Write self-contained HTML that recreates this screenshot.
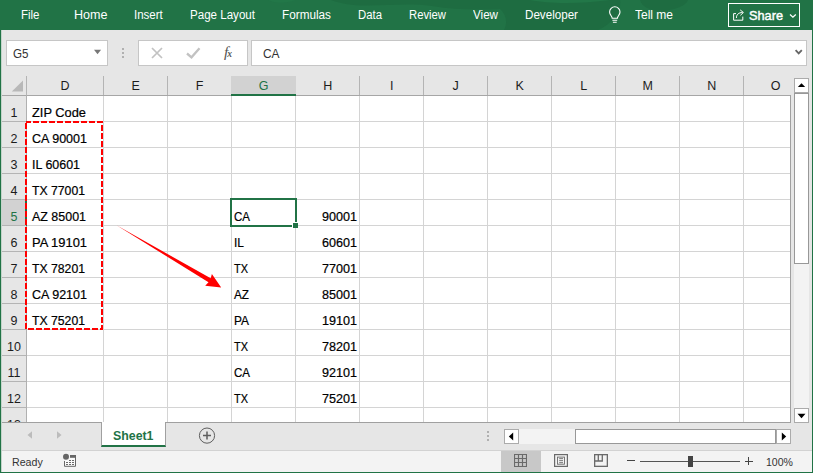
<!DOCTYPE html>
<html lang="en"><head><meta charset="utf-8"><title>Excel</title>
<style>
*{box-sizing:border-box;margin:0;padding:0}
html,body{width:813px;height:473px;overflow:hidden;background:#e6e6e6}
body{position:relative;font-family:"Liberation Sans",sans-serif;color:#000;-webkit-font-smoothing:antialiased}
.a{position:absolute;white-space:nowrap}
.t{position:absolute;white-space:nowrap;line-height:1;transform-origin:0 0}
.m{color:#fff;font-size:12px;top:9px}
.ch{font-size:12.5px;color:#1c1c1c;text-align:center;width:64px;top:80px}
.rh{font-size:12.5px;color:#1c1c1c;text-align:center;width:24px;left:2px}
.c{font-size:12.5px;color:#000;-webkit-text-stroke:0.2px #000}
.r{text-align:right}
</style></head><body>

<div class="a" id="ribbon" style="left:0;top:0;width:813px;height:30px;background:#217346"></div>
<svg class="a" style="left:0;top:0" width="813" height="30" viewBox="0 0 813 30">
<g fill="#1e6c41">
<path d="M331 0 C342 4 352 5.5 366 5.5 C390 5.5 410 3 432 6 C455 10 478 10 500 9 C506 14 508 22 504 30 L598 30 C612 24 622 12 620 0 Z"></path>
<path d="M640 0 C642 8 652 11 663 10.5 C675 10 686 6 688 0 Z"></path>
</g>
<g fill="#227748">
<path d="M268 0 C274 3 284 4 296 0 Z"></path>
<path d="M530 0 C550 4 580 4 610 0 Z"></path>
</g>
</svg>
<span class="t m" style="left: 21px; transform: scaleX(0.9564);">File</span>
<span class="t m" style="left: 74px; transform: scaleX(1.0464);">Home</span>
<span class="t m" style="left: 133.5px; transform: scaleX(0.9595);">Insert</span>
<span class="t m" style="left: 190px; transform: scaleX(0.9645);">Page Layout</span>
<span class="t m" style="left: 282px; transform: scaleX(0.9797);">Formulas</span>
<span class="t m" style="left: 358px; transform: scaleX(0.9464);">Data</span>
<span class="t m" style="left: 409px; transform: scaleX(0.9401);">Review</span>
<span class="t m" style="left: 472.5px; transform: scaleX(0.9691);">View</span>
<span class="t m" style="left: 525px; transform: scaleX(0.9689);">Developer</span>
<span class="t m" style="left: 634.5px; transform: scaleX(0.9996);">Tell me</span>
<svg class="a" style="left:606px;top:5px" width="18" height="20" viewBox="0 0 18 20" fill="none" stroke="#fff" stroke-width="1.1">
<path d="M6.2 13.2 C6.2 11.2 3.6 10 3.6 7 A5.2 5.2 0 0 1 14 7 C14 10 11.4 11.2 11.4 13.2 Z"></path>
<path d="M6.4 15.2 H11.2 M6.9 17.2 H10.7"></path>
</svg>
<div class="a" style="left:728px;top:3px;width:72px;height:24px;border:1px solid #fff"></div>
<svg class="a" style="left:731px;top:8px" width="14" height="14" viewBox="0 0 14 14" fill="none" stroke="#fff" stroke-width="1">
<path d="M5 5.6 H2.6 V12.2 H11.8 V8.6"></path>
<path d="M5.4 10 C5.4 6.6 7.6 4.5 11.6 4.5 M9.2 1.9 L12.4 4.5 L9.4 7.3"></path>
</svg>
<span class="t" style="left: 749px; top: 8.5px; color: rgb(255, 255, 255); font-size: 13.5px; -webkit-text-stroke: 0.45px rgb(255, 255, 255); transform: scaleX(0.9436);">Share</span>
<svg class="a" style="left:787.6px;top:11.5px" width="10" height="8" viewBox="0 0 10 8" fill="none" stroke="#fff" stroke-width="1.3"><path d="M2 2.5 L4.9 5.2 L7.8 2.5"></path></svg>
<div class="a" style="left:6px;top:40px;width:102px;height:26px;background:#fff;border:1px solid #c6c6c6"></div>
<span class="t" style="left: 13px; top: 48px; font-size: 12.5px; color: rgb(51, 51, 51); transform: scaleX(0.9288);">G5</span>
<svg class="a" style="left:93px;top:49px" width="10" height="7" viewBox="0 0 10 7"><path d="M1 0.8 H8.1 L4.55 5.2 Z" fill="#777"></path></svg>
<div class="a" style="left:122px;top:48px;width:2px;height:2px;background:#b0b0b0;box-shadow:0 4px 0 #b0b0b0,0 8px 0 #b0b0b0"></div>
<div class="a" style="left:138px;top:40px;width:110px;height:26px;background:#fff;border:1px solid #c6c6c6"></div>
<svg class="a" style="left:151px;top:47px" width="12" height="12" viewBox="0 0 12 12" fill="none" stroke="#c2c2c2" stroke-width="1.7"><path d="M1 1 L11 11 M11 1 L1 11"></path></svg>
<svg class="a" style="left:186px;top:47px" width="15" height="12" viewBox="0 0 15 12" fill="none" stroke="#c2c2c2" stroke-width="2.3"><path d="M1 6.5 L5.5 10.3 L13.5 1.2"></path></svg>
<span class="t" style="left:224px;top:44px;font-family:'Liberation Serif',serif;font-style:italic;font-size:15.5px;color:#555">f<span style="font-size:9.5px;font-weight:bold;margin-left:-1px">x</span></span>
<div class="a" style="left:251px;top:40px;width:556px;height:26px;background:#fff;border:1px solid #c6c6c6"></div>
<span class="t" style="left: 263px; top: 48px; font-size: 12.5px; color: rgb(51, 51, 51); transform: scaleX(0.9554);">CA</span>
<svg class="a" style="left:794px;top:48.3px" width="10" height="8" viewBox="0 0 10 8" fill="none" stroke="#666" stroke-width="1.9"><path d="M1.6 2.2 L4.7 5.3 L7.8 2.2"></path></svg>
<div class="a" style="left:27px;top:96px;width:764px;height:326px;background:#fff"></div>
<span class="t ch" style="left:27px;width:76px;color:#1c1c1c">D</span>
<span class="t ch" style="left:103.7px;width:64px;color:#1c1c1c">E</span>
<span class="t ch" style="left:167.7px;width:64px;color:#1c1c1c">F</span>
<span class="t ch" style="left:295.7px;width:64px;color:#1c1c1c">H</span>
<span class="t ch" style="left:359.7px;width:64px;color:#1c1c1c">I</span>
<span class="t ch" style="left:423.7px;width:64px;color:#1c1c1c">J</span>
<span class="t ch" style="left:487.7px;width:64px;color:#1c1c1c">K</span>
<span class="t ch" style="left:551.7px;width:64px;color:#1c1c1c">L</span>
<span class="t ch" style="left:615.7px;width:64px;color:#1c1c1c">M</span>
<span class="t ch" style="left:679.7px;width:64px;color:#1c1c1c">N</span>
<span class="t ch" style="left:743.7px;width:64px;color:#1c1c1c">O</span>
<div class="a" style="left:26px;top:76px;width:1px;height:19px;background:#b4b4b4"></div>
<div class="a" style="left:103px;top:76px;width:1px;height:19px;background:#b4b4b4"></div>
<div class="a" style="left:167px;top:76px;width:1px;height:19px;background:#b4b4b4"></div>
<div class="a" style="left:231px;top:76px;width:1px;height:19px;background:#b4b4b4"></div>
<div class="a" style="left:295px;top:76px;width:1px;height:19px;background:#b4b4b4"></div>
<div class="a" style="left:359px;top:76px;width:1px;height:19px;background:#b4b4b4"></div>
<div class="a" style="left:423px;top:76px;width:1px;height:19px;background:#b4b4b4"></div>
<div class="a" style="left:487px;top:76px;width:1px;height:19px;background:#b4b4b4"></div>
<div class="a" style="left:551px;top:76px;width:1px;height:19px;background:#b4b4b4"></div>
<div class="a" style="left:615px;top:76px;width:1px;height:19px;background:#b4b4b4"></div>
<div class="a" style="left:679px;top:76px;width:1px;height:19px;background:#b4b4b4"></div>
<div class="a" style="left:743px;top:76px;width:1px;height:19px;background:#b4b4b4"></div>
<div class="a" style="left:2px;top:95px;width:789px;height:1px;background:#a6a6a6"></div>
<div class="a" style="left:231px;top:76px;width:65px;height:20px;background:#d2d2d2;border-bottom:2px solid #217346"></div>
<span class="t ch" style="left:231.7px;width:64px;color:#217346">G</span>
<svg class="a" style="left:11px;top:80px" width="13" height="12" viewBox="0 0 13 12"><path d="M12 0.5 V11.5 H0.8 Z" fill="#b8b8b8"></path></svg>
<div class="a" style="left:26px;top:95px;width:1px;height:327px;background:#b0b0b0"></div>
<div class="a" style="left:2px;top:200px;width:25px;height:26px;background:#d2d2d2;border-right:2px solid #217346"></div>
<div class="a" style="left:2px;top:121px;width:24px;height:1px;background:#b4b4b4"></div>
<div class="a" style="left:27px;top:121px;width:764px;height:1px;background:#d4d4d4"></div>
<div class="a" style="left:2px;top:147px;width:24px;height:1px;background:#b4b4b4"></div>
<div class="a" style="left:27px;top:147px;width:764px;height:1px;background:#d4d4d4"></div>
<div class="a" style="left:2px;top:173px;width:24px;height:1px;background:#b4b4b4"></div>
<div class="a" style="left:27px;top:173px;width:764px;height:1px;background:#d4d4d4"></div>
<div class="a" style="left:2px;top:199px;width:24px;height:1px;background:#b4b4b4"></div>
<div class="a" style="left:27px;top:199px;width:764px;height:1px;background:#d4d4d4"></div>
<div class="a" style="left:2px;top:225px;width:24px;height:1px;background:#b4b4b4"></div>
<div class="a" style="left:27px;top:225px;width:764px;height:1px;background:#d4d4d4"></div>
<div class="a" style="left:2px;top:251px;width:24px;height:1px;background:#b4b4b4"></div>
<div class="a" style="left:27px;top:251px;width:764px;height:1px;background:#d4d4d4"></div>
<div class="a" style="left:2px;top:277px;width:24px;height:1px;background:#b4b4b4"></div>
<div class="a" style="left:27px;top:277px;width:764px;height:1px;background:#d4d4d4"></div>
<div class="a" style="left:2px;top:303px;width:24px;height:1px;background:#b4b4b4"></div>
<div class="a" style="left:27px;top:303px;width:764px;height:1px;background:#d4d4d4"></div>
<div class="a" style="left:2px;top:329px;width:24px;height:1px;background:#b4b4b4"></div>
<div class="a" style="left:27px;top:329px;width:764px;height:1px;background:#d4d4d4"></div>
<div class="a" style="left:2px;top:355px;width:24px;height:1px;background:#b4b4b4"></div>
<div class="a" style="left:27px;top:355px;width:764px;height:1px;background:#d4d4d4"></div>
<div class="a" style="left:2px;top:381px;width:24px;height:1px;background:#b4b4b4"></div>
<div class="a" style="left:27px;top:381px;width:764px;height:1px;background:#d4d4d4"></div>
<div class="a" style="left:2px;top:407px;width:24px;height:1px;background:#b4b4b4"></div>
<div class="a" style="left:27px;top:407px;width:764px;height:1px;background:#d4d4d4"></div>
<div class="a" style="left:103px;top:96px;width:1px;height:326px;background:#d4d4d4"></div>
<div class="a" style="left:167px;top:96px;width:1px;height:326px;background:#d4d4d4"></div>
<div class="a" style="left:231px;top:96px;width:1px;height:326px;background:#d4d4d4"></div>
<div class="a" style="left:295px;top:96px;width:1px;height:326px;background:#d4d4d4"></div>
<div class="a" style="left:359px;top:96px;width:1px;height:326px;background:#d4d4d4"></div>
<div class="a" style="left:423px;top:96px;width:1px;height:326px;background:#d4d4d4"></div>
<div class="a" style="left:487px;top:96px;width:1px;height:326px;background:#d4d4d4"></div>
<div class="a" style="left:551px;top:96px;width:1px;height:326px;background:#d4d4d4"></div>
<div class="a" style="left:615px;top:96px;width:1px;height:326px;background:#d4d4d4"></div>
<div class="a" style="left:679px;top:96px;width:1px;height:326px;background:#d4d4d4"></div>
<div class="a" style="left:743px;top:96px;width:1px;height:326px;background:#d4d4d4"></div>
<span class="t rh" style="top:107px;color:#1c1c1c">1</span>
<span class="t rh" style="top:133px;color:#1c1c1c">2</span>
<span class="t rh" style="top:159px;color:#1c1c1c">3</span>
<span class="t rh" style="top:185px;color:#1c1c1c">4</span>
<span class="t rh" style="top:211px;color:#217346">5</span>
<span class="t rh" style="top:237px;color:#1c1c1c">6</span>
<span class="t rh" style="top:263px;color:#1c1c1c">7</span>
<span class="t rh" style="top:289px;color:#1c1c1c">8</span>
<span class="t rh" style="top:315px;color:#1c1c1c">9</span>
<span class="t rh" style="top:341px;color:#1c1c1c">10</span>
<span class="t rh" style="top:367px;color:#1c1c1c">11</span>
<span class="t rh" style="top:393px;color:#1c1c1c">12</span>
<span class="t rh" style="top:419px;color:#1c1c1c">13</span>
<span class="t c" style="left: 32px; top: 107px; transform: scaleX(1.027);">ZIP Code</span>
<span class="t c" style="left: 32px; top: 133px; transform: scaleX(1.0014);">CA 90001</span>
<span class="t c" style="left: 32px; top: 159px; transform: scaleX(0.9958);">IL 60601</span>
<span class="t c" style="left: 32px; top: 185px; transform: scaleX(0.9775);">TX 77001</span>
<span class="t c" style="left: 32px; top: 211px; transform: scaleX(0.996);">AZ 85001</span>
<span class="t c" style="left: 32px; top: 237px; transform: scaleX(1.032);">PA 19101</span>
<span class="t c" style="left: 32px; top: 263px; transform: scaleX(0.9775);">TX 78201</span>
<span class="t c" style="left: 32px; top: 289px; transform: scaleX(1.0014);">CA 92101</span>
<span class="t c" style="left: 32px; top: 315px; transform: scaleX(0.9775);">TX 75201</span>
<span class="t c" style="left: 234px; top: 211px; transform: scaleX(0.9209);">CA</span>
<span class="t c r" style="left: 322px; top: 211px; transform: scaleX(1.0067);">90001</span>
<span class="t c" style="left: 234px; top: 237px; transform: scaleX(0.9581);">IL</span>
<span class="t c r" style="left: 322px; top: 237px; transform: scaleX(1.0067);">60601</span>
<span class="t c" style="left: 234px; top: 263px; transform: scaleX(0.8759);">TX</span>
<span class="t c r" style="left: 322px; top: 263px; transform: scaleX(1.0067);">77001</span>
<span class="t c" style="left: 234px; top: 289px; transform: scaleX(0.9384);">AZ</span>
<span class="t c r" style="left: 322px; top: 289px; transform: scaleX(1.0067);">85001</span>
<span class="t c" style="left: 234px; top: 315px; transform: scaleX(0.9524);">PA</span>
<span class="t c r" style="left: 322px; top: 315px; transform: scaleX(1.0067);">19101</span>
<span class="t c" style="left: 234px; top: 341px; transform: scaleX(0.8759);">TX</span>
<span class="t c r" style="left: 322px; top: 341px; transform: scaleX(1.0067);">78201</span>
<span class="t c" style="left: 234px; top: 367px; transform: scaleX(0.9209);">CA</span>
<span class="t c r" style="left: 322px; top: 367px; transform: scaleX(1.0067);">92101</span>
<span class="t c" style="left: 234px; top: 393px; transform: scaleX(0.8759);">TX</span>
<span class="t c r" style="left: 322px; top: 393px; transform: scaleX(1.0067);">75201</span>
<div class="a" style="left:230px;top:198px;width:67px;height:29px;border:2px solid #217346"></div>
<div class="a" style="left:292px;top:222px;width:6px;height:6px;background:#217346;border-top:1px solid #fff;border-left:1px solid #fff"></div>
<div class="a" style="left:790px;top:95px;width:1px;height:328px;background:#a0a0a0"></div>
<svg class="a" style="left:0;top:0" width="813" height="473" viewBox="0 0 813 473">
<rect x="26" y="122" width="76" height="207" fill="none" stroke="#ff0000" stroke-width="2" stroke-dasharray="6 2" stroke-dashoffset="1"></rect>
<path d="M116.5 225.3 L210.7 278.3 L211.9 274.1 L221.2 287.4 L205.2 285.8 L208.5 282.2 Z" fill="#ff0000"></path>
</svg>
<div class="a" style="left:1px;top:422px;width:811px;height:28px;background:#e6e6e6"></div>
<div class="a" style="left:2px;top:422px;width:789px;height:1px;background:#a0a0a0"></div>
<div class="a" style="left:794px;top:78px;width:15px;height:345px;background:#f3f3f3"></div>
<div class="a" style="left:794px;top:78px;width:15px;height:15px;background:#fff;border:1px solid #ababab"></div>
<svg class="a" style="left:797.3px;top:82px" width="9" height="6" viewBox="0 0 9 6"><path d="M0.8 5 L4.5 1.2 L8.2 5 Z" fill="#000"></path></svg>
<div class="a" style="left:794px;top:93px;width:15px;height:171px;background:#fff;border:1px solid #989898"></div>
<div class="a" style="left:794px;top:408px;width:15px;height:15px;background:#fff;border:1px solid #ababab"></div>
<svg class="a" style="left:797px;top:413px" width="9" height="6" viewBox="0 0 9 6"><path d="M0.5 0.8 L4.5 5.2 L8.5 0.8 Z" fill="#000"></path></svg>
<svg class="a" style="left:26.4px;top:430.4px" width="8" height="10" viewBox="0 0 8 10"><path d="M6 1.3 V8.7 L1.5 5 Z" fill="#bcbcbc"></path></svg>
<svg class="a" style="left:55px;top:430.4px" width="8" height="10" viewBox="0 0 8 10"><path d="M2 1.3 V8.7 L6.5 5 Z" fill="#bcbcbc"></path></svg>
<div class="a" style="left:101px;top:422px;width:65px;height:25px;background:#fff;border-left:1px solid #a0a0a0;border-right:1px solid #a0a0a0;border-bottom:2px solid #217346"></div>
<span class="t" style="left: 113px; top: 429.7px; font-size: 12.5px; font-weight: bold; color: rgb(33, 115, 70); transform: scaleX(0.9878);">Sheet1</span>
<svg class="a" style="left:198px;top:427px" width="18" height="18" viewBox="0 0 18 18" fill="none" stroke="#5e5e5e"><circle cx="9" cy="8.6" r="7.6" stroke-width="1"></circle><path d="M9 4.6 V12.6 M5 8.6 H13" stroke-width="1.5"></path></svg>
<div class="a" style="left:487px;top:431px;width:2px;height:2px;background:#b0b0b0;box-shadow:0 4px 0 #b0b0b0,0 8px 0 #b0b0b0"></div>
<div class="a" style="left:504px;top:429px;width:287px;height:15px;background:#f3f3f3"></div>
<div class="a" style="left:504px;top:429px;width:15px;height:15px;background:#fff;border:1px solid #ababab"></div>
<svg class="a" style="left:508px;top:432px" width="6" height="9" viewBox="0 0 6 9"><path d="M5.2 0.5 L0.8 4.5 L5.2 8.5 Z" fill="#000"></path></svg>
<div class="a" style="left:575px;top:429px;width:201px;height:15px;background:#fff;border:1px solid #989898"></div>
<div class="a" style="left:776px;top:429px;width:15px;height:15px;background:#fff;border:1px solid #ababab"></div>
<svg class="a" style="left:781px;top:432px" width="6" height="9" viewBox="0 0 6 9"><path d="M0.8 0.5 L5.2 4.5 L0.8 8.5 Z" fill="#000"></path></svg>
<div class="a" style="left:1px;top:450px;width:811px;height:22px;background:#f3f3f3;border-top:1px solid #d2d2d2"></div>
<span class="t" style="left: 12.3px; top: 456.7px; font-size: 11.2px; color: rgb(51, 51, 51); transform: scaleX(0.9523);">Ready</span>
<svg class="a" style="left:63px;top:453px" width="14" height="15" viewBox="0 0 14 15"><rect x="2" y="2" width="10.5" height="11" fill="#fafafa"></rect><path d="M1.5 8 V13.3 H12.5 V2.5" fill="none" stroke="#666"></path><rect x="7" y="2" width="6" height="2.8" fill="#666"></rect><circle cx="3" cy="3.8" r="4" fill="#f3f3f3"></circle><circle cx="3" cy="3.8" r="3" fill="#666"></circle><path d="M6 7.5 H8 M9 7.5 H11 M3 9.5 H5 M6 9.5 H8 M9 9.5 H11 M3 11.5 H5 M6 11.5 H8 M9 11.5 H11" stroke="#6a6a6a" stroke-width="1" shape-rendering="crispEdges"></path></svg>
<div class="a" style="left:501px;top:451px;width:40px;height:21px;background:#c8c8c8"></div>
<svg class="a" style="left:514px;top:454px" width="13" height="13" viewBox="0 0 13 13" fill="none" stroke="#6a6a6a" stroke-width="1.15"><path d="M0.5 0.5 H12.5 V12.5 H0.5 Z M4.5 0.5 V12.5 M8.5 0.5 V12.5 M0.5 4.5 H12.5 M0.5 8.5 H12.5"></path></svg>
<svg class="a" style="left:554px;top:454px" width="14" height="13" viewBox="0 0 14 13" fill="none" stroke="#6a6a6a"><rect x="0.6" y="0.6" width="12.8" height="11.8" stroke-width="1.2"></rect><rect x="3.5" y="3.1" width="7" height="7.1" stroke-width="0.9"></rect><path d="M5.2 4.65 H9 M5.2 6.65 H9 M5.2 8.65 H9" stroke-width="0.8" stroke="#555"></path></svg>
<svg class="a" style="left:594px;top:454px" width="14" height="13" viewBox="0 0 14 13" fill="none" stroke="#6a6a6a" stroke-width="1.3"><rect x="0.65" y="0.65" width="12.7" height="11.7"></rect><path d="M4.3 0.6 V7 M8.3 0.6 V7 M0.6 7 H8.95"></path></svg>
<div class="a" style="left:627px;top:460px;width:8px;height:1px;background:#444"></div>
<div class="a" style="left:640px;top:461px;width:100px;height:1px;background:#555"></div>
<div class="a" style="left:688px;top:456px;width:5px;height:11px;background:#444"></div>
<div class="a" style="left:745px;top:460.5px;width:8px;height:1px;background:#444"></div>
<div class="a" style="left:748.3px;top:457px;width:1px;height:8px;background:#444"></div>
<span class="t" style="left: 766px; top: 456.7px; font-size: 11.2px; color: rgb(51, 51, 51); transform: scaleX(0.9432);">100%</span>
<div class="a" style="left:0;top:0;width:1px;height:473px;background:#217346"></div>
<div class="a" style="left:1px;top:30px;width:1px;height:443px;background:#c4d4ca"></div>
<div class="a" style="left:812px;top:0;width:1px;height:473px;background:#217346"></div>
<div class="a" style="left:0;top:472px;width:813px;height:1px;background:#217346"></div>
</body></html>
